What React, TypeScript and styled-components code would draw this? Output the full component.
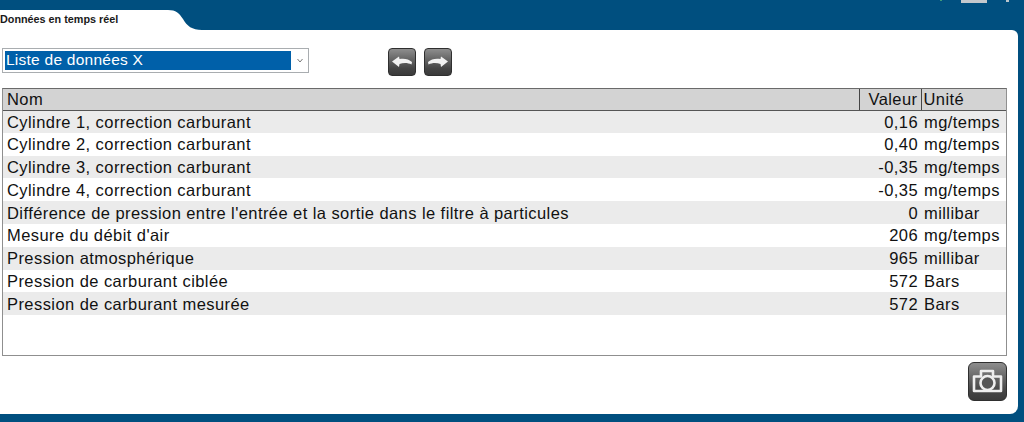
import React from "react";
import styled, { createGlobalStyle } from "styled-components";

const Global = createGlobalStyle`
  html, body { margin: 0; padding: 0; height: 422px; overflow: hidden; background: #004f7f; }
  #root { height: 422px; }
`;

const Page = styled.div`
  width: 1024px;
  height: 422px;
  display: flex;
  flex-direction: column;
  background: #004f7f;
  font-family: "Liberation Sans", Arial, sans-serif;
  color: #111;
  position: relative;
  overflow: hidden;
`;

const WindowMarks = styled.div`
  height: 10px;
  flex: none;
  display: flex;
  align-items: flex-start;
  padding-left: 940px;
`;

const Mark = styled.span<{ $w: number; $h: number; $c: string; $ml: number }>`
  width: ${(p) => p.$w}px;
  height: ${(p) => p.$h}px;
  margin-left: ${(p) => p.$ml}px;
  background: ${(p) => p.$c};
  flex: none;
`;

const TabRow = styled.div`
  display: flex;
  height: 20px;
  flex: none;
`;

const Tab = styled.div`
  width: 168px;
  background: #fff;
  font-size: 10.8px;
  font-weight: 700;
  line-height: 19px;
  color: #1a1a1a;
  white-space: nowrap;
`;

const Panel = styled.div`
  flex: none;
  width: 1018px;
  height: 384px;
  background: #fff;
  border-radius: 0 6px 8px 0;
  box-sizing: border-box;
  padding: 18px 11px 0 2px;
  display: flex;
  flex-direction: column;
`;

const Toolbar = styled.div`
  display: flex;
  align-items: flex-start;
  height: 40px;
  flex: none;
`;

const Select = styled.div`
  width: 307px;
  height: 25px;
  box-sizing: border-box;
  border: 1px solid #a9adb0;
  padding: 2px;
  display: flex;
  align-items: stretch;
  margin-right: 79px;
`;

const Selected = styled.div`
  width: 287px;
  background: #0060a9;
  color: #fff;
  font-size: 15.5px;
  line-height: 18px;
  letter-spacing: 0.25px;
  padding-left: 1px;
  box-sizing: border-box;
`;

const Chevron = styled.svg`
  width: 15px;
  height: 19px;
  flex: none;
`;

const IconButton = styled.div<{ $size: number }>`
  width: ${(p) => p.$size}px;
  height: ${(p) => p.$size}px;
  border-radius: ${(p) => (p.$size > 30 ? 6 : 4)}px;
  border: 1px solid #2f2f2f;
  box-sizing: border-box;
  background: linear-gradient(#8e8e8e 0%, #6a6a6a 35%, #454545 75%, #3a3a3a 100%);
  display: flex;
  align-items: center;
  justify-content: center;
  margin-right: 8px;
`;

const TableWrap = styled.div`
  width: 1005px;
  height: 268px;
  flex: none;
  box-sizing: border-box;
  border: 1px solid #8f8f8f;
  border-top-color: #6a6a6a;
`;

const Table = styled.table`
  width: 1003px;
  border-collapse: collapse;
  table-layout: fixed;
  font-size: 16.5px;
  letter-spacing: 0.43px;
`;

const Head = styled.th<{ $align?: string; $w?: number }>`
  height: 21px;
  padding: 0 3px 0 ${(p) => (p.$align ? 3 : 2)}px;
  background: #d3d3d3;
  border-bottom: 1px solid #555;
  border-right: 1px solid #444;
  font-weight: 400;
  text-align: ${(p) => p.$align || "left"};
  width: ${(p) => (p.$w ? `${p.$w}px` : "auto")};
  box-sizing: border-box;
  line-height: 18px;
  &:first-child { padding-left: 4px; }
  &:last-child { border-right: none; }
`;

const Row = styled.tr<{ $even: boolean }>`
  background: ${(p) => (p.$even ? "#ebebeb" : "#fff")};
  height: 22.8px;
`;

const Cell = styled.td<{ $num?: boolean }>`
  padding: 0 3px 0 3px;
  text-align: ${(p) => (p.$num ? "right" : "left")};
  white-space: nowrap;
  overflow: visible;
  line-height: 18px;
  &:first-child { padding-left: 4px; }
`;

const Footer = styled.div`
  flex: 1;
  display: flex;
  justify-content: flex-end;
  padding-top: 6px;
  margin-right: -8px;
`;

const rows: [string, string, string][] = [
  ["Cylindre 1, correction carburant", "0,16", "mg/temps"],
  ["Cylindre 2, correction carburant", "0,40", "mg/temps"],
  ["Cylindre 3, correction carburant", "-0,35", "mg/temps"],
  ["Cylindre 4, correction carburant", "-0,35", "mg/temps"],
  ["Différence de pression entre l'entrée et la sortie dans le filtre à particules", "0", "millibar"],
  ["Mesure du débit d'air", "206", "mg/temps"],
  ["Pression atmosphérique", "965", "millibar"],
  ["Pression de carburant ciblée", "572", "Bars"],
  ["Pression de carburant mesurée", "572", "Bars"],
];

export default function App() {
  return (
    <Page>
      <Global />
      <WindowMarks>
        <Mark $w={2} $h={1} $c="#3f9a7a" $ml={0} />
        <Mark $w={26} $h={3} $c="#c4c8cc" $ml={19} />
        <Mark $w={3} $h={2} $c="#b8c4cc" $ml={19} />
      </WindowMarks>
      <TabRow>
        <Tab>Données en temps réel</Tab>
        <svg width="34" height="20" viewBox="0 0 34 20">
          <path d="M0 0 C8 0 11 3 15 9 C19 16 24 20 34 20 L0 20 Z" fill="#fff" />
        </svg>
      </TabRow>
      <Panel>
        <Toolbar>
          <Select>
            <Selected>Liste de données X</Selected>
            <Chevron viewBox="0 0 15 19">
              <path d="M6.5 8 L9 11 L11.5 8" fill="none" stroke="#777" strokeWidth="1" />
            </Chevron>
          </Select>
          <IconButton $size={28}>
            <svg width="22" height="12" viewBox="0 0 22 12">
              <path d="M1 5.5 L8 0.5 L8.5 3 C13 2 18 3 21 6 L20.5 8.5 C17 6.5 12 6.5 8.5 8 L8 11 Z" fill="#f2f2f2" />
            </svg>
          </IconButton>
          <IconButton $size={28}>
            <svg width="22" height="12" viewBox="0 0 22 12">
              <path d="M21 5.5 L14 0.5 L13.5 3 C9 2 4 3 1 6 L1.5 8.5 C5 6.5 10 6.5 13.5 8 L14 11 Z" fill="#f2f2f2" />
            </svg>
          </IconButton>
        </Toolbar>
        <TableWrap>
          <Table>
            <thead>
              <tr>
                <Head>Nom</Head>
                <Head $align="right" $w={62}>Valeur</Head>
                <Head $w={85}>Unité</Head>
              </tr>
            </thead>
            <tbody>
              {rows.map((r, i) => (
                <Row key={r[0]} $even={i % 2 === 0}>
                  <Cell>{r[0]}</Cell>
                  <Cell $num>{r[1]}</Cell>
                  <Cell>{r[2]}</Cell>
                </Row>
              ))}
            </tbody>
          </Table>
        </TableWrap>
        <Footer>
          <IconButton $size={39}>
            <svg width="31" height="27" viewBox="0 0 31 27" fill="none" stroke="#eeeeee" strokeWidth="2.6">
              <path d="M2 8.5 H9 V3 H21 V8.5 H29 V23 H2 Z" strokeLinejoin="round" />
              <circle cx="15.5" cy="15" r="7" fill="#555" />
            </svg>
          </IconButton>
        </Footer>
      </Panel>
    </Page>
  );
}
